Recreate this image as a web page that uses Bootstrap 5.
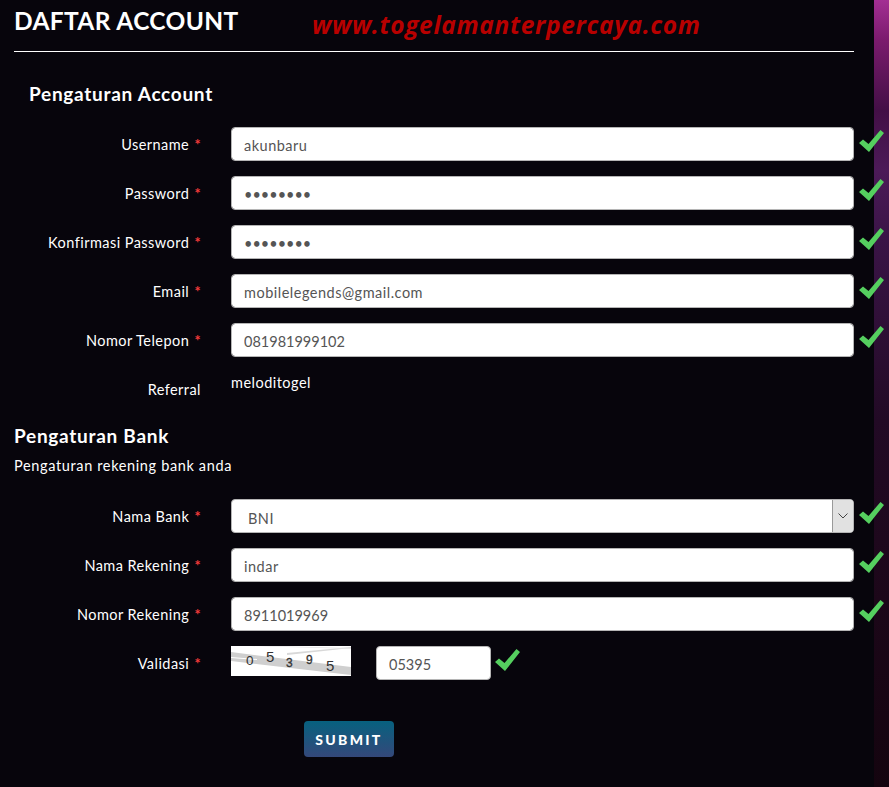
<!DOCTYPE html>
<html lang="id">
<head>
<meta charset="utf-8">
<title>Daftar Account</title>
<link rel="stylesheet" href="https://cdn.jsdelivr.net/npm/bootstrap@5.3.0/dist/css/bootstrap.min.css">
<style>
html,body{height:787px;overflow:hidden}
body{background:#07050c;color:#fff;font-family:"Lato","Noto Sans",sans-serif;font-size:14.5px;letter-spacing:.45px}
.shell{height:787px}
.panel{width:874px;flex:none;padding:0 20px 0 14px;background:#07050c}
.strip{flex:1;background:linear-gradient(180deg,#a32f93 0,#7b1b6d 40px,#430f46 110px,#4c1a58 170px,#3a1446 240px,#220a25 420px,#1c0719 600px,#14040f 787px)}
.headbar{height:52px;border-bottom:1px solid #fff}
.pagetitle{font-size:24.5px;font-weight:700;line-height:41px;margin:0;width:298px;flex:none;letter-spacing:.35px}
.siteurl{font-family:"Open Sans",sans-serif;font-weight:700;font-style:italic;font-size:24.5px;color:#b80000;line-height:49px;letter-spacing:.65px}
.secthead{font-size:19px;font-weight:700;margin:0;line-height:24px;letter-spacing:.72px}
.secthead.first{padding:30px 0 0 15px;margin-bottom:21px}
.frow{display:flex;align-items:flex-start;height:34px;margin-bottom:15px}
.flabel{width:187px;flex:none;text-align:right;line-height:36px;margin:0;white-space:nowrap}
.req{color:#f43a3a;margin-left:1px;font-weight:700}
.field{margin-left:30px;width:623px;flex:none}
.field .form-control,.field .form-select,.capfield{height:34px;border:1px solid #b5b5b5;border-radius:4px;padding:2px 12px 0;color:#555;font-size:14.5px;letter-spacing:.5px;box-shadow:none;background-color:#fff}
.field .plainspaced,.capfield{letter-spacing:0}
.selwrap{position:relative}
.field .form-select{padding-left:16px;padding-top:6px;background-image:none}
.selarrow{position:absolute;right:1px;top:1px;bottom:1px;width:21px;background:#e1e1e1;border-left:1px solid #999;border-radius:0 3px 3px 0;display:flex;align-items:center;justify-content:center}
.okmark{width:26px;height:24px;margin:2px 0 0 4px;flex:none;position:relative;z-index:2}
.reftext{margin-left:30px;line-height:22px;letter-spacing:.48px}
.refrow{height:34px;margin-bottom:18px}
.bankhead{line-height:24px;margin-bottom:7px}
.banksub{line-height:21px;margin-bottom:23px;letter-spacing:.64px}
.capimg{margin-left:30px;display:block;flex:none}
.capfield{width:115px;margin-left:25px;flex:none}
.capok{margin-top:2px;margin-left:3px}
.subwrap{padding-left:290px;margin-top:41px}
.sendbtn{width:90px;height:36px;padding:0;border:0;border-radius:4px;color:#fff;font-weight:900;font-size:14px;letter-spacing:2.3px;background:linear-gradient(180deg,#07617f,#34487a)}
</style>
</head>
<body>
<svg width="0" height="0" class="position-absolute"><defs><symbol id="tick" viewBox="0 0 26 24"><path d="M1 14 5 10.500 10.500 15 22.500 1 26 4 11 23Z" fill="#55cf5f"/></symbol></defs></svg>
<div class="shell d-flex">
<main class="panel">
  <div class="headbar d-flex align-items-start">
    <h1 class="pagetitle">DAFTAR ACCOUNT</h1>
    <div class="siteurl">www.togelamanterpercaya.com</div>
  </div>
  <form>
    <h2 class="secthead first">Pengaturan Account</h2>
    <div class="frow"><label class="flabel">Username <span class="req">*</span></label><div class="field"><input class="form-control" value="akunbaru"></div><svg class="okmark"><use href="#tick"/></svg></div>
    <div class="frow"><label class="flabel">Password <span class="req">*</span></label><div class="field"><input class="form-control plainspaced" type="password" value="12345678"></div><svg class="okmark"><use href="#tick"/></svg></div>
    <div class="frow"><label class="flabel">Konfirmasi Password <span class="req">*</span></label><div class="field"><input class="form-control plainspaced" type="password" value="12345678"></div><svg class="okmark"><use href="#tick"/></svg></div>
    <div class="frow"><label class="flabel">Email <span class="req">*</span></label><div class="field"><input class="form-control" value="mobilelegends@gmail.com"></div><svg class="okmark"><use href="#tick"/></svg></div>
    <div class="frow"><label class="flabel">Nomor Telepon <span class="req">*</span></label><div class="field"><input class="form-control plainspaced" value="081981999102"></div><svg class="okmark"><use href="#tick"/></svg></div>
    <div class="frow refrow"><label class="flabel">Referral</label><div class="reftext">meloditogel</div></div>
    <h2 class="secthead bankhead">Pengaturan Bank</h2>
    <p class="banksub">Pengaturan rekening bank anda</p>
    <div class="frow"><label class="flabel">Nama Bank <span class="req">*</span></label><div class="field selwrap"><select class="form-select"><option>BNI</option></select><span class="selarrow"><svg width="10" height="6" viewBox="0 0 10 6"><path d="M.5.5 5 5 9.500.5" fill="none" stroke="#444"/></svg></span></div><svg class="okmark"><use href="#tick"/></svg></div>
    <div class="frow"><label class="flabel">Nama Rekening <span class="req">*</span></label><div class="field"><input class="form-control" value="indar"></div><svg class="okmark"><use href="#tick"/></svg></div>
    <div class="frow"><label class="flabel">Nomor Rekening <span class="req">*</span></label><div class="field"><input class="form-control plainspaced" value="8911019969"></div><svg class="okmark"><use href="#tick"/></svg></div>
    <div class="frow"><label class="flabel">Validasi <span class="req">*</span></label>
      <svg class="capimg" width="120" height="30" viewBox="0 0 120 30">
        <rect width="120" height="30" fill="#fff"/>
        <path d="M0 6 120 21V29L0 15Z" fill="#cfcfcf"/><path d="M0 11 26 13V14L0 12Z" fill="#fff"/><path d="M56 9 120 2V1L56 7Z" fill="#d8d8d8"/><path d="M20 0 120 3V2L40 0Z" fill="#e4e4e4"/>
        <g font-family="Liberation Sans,sans-serif" fill="#333"><text x="15" y="19" font-size="13.500" font-weight="400">0</text><text x="35" y="16" font-size="15">5</text><text x="55" y="21" font-size="12" stroke="#333" stroke-width=".3">3</text><text x="75" y="18" font-size="12" stroke="#333" stroke-width=".3">9</text><text x="95" y="25" font-size="15">5</text></g>
      </svg>
      <input class="capfield" value="05395"><svg class="okmark capok"><use href="#tick"/></svg></div>
    <div class="subwrap"><button type="button" class="btn sendbtn">SUBMIT</button></div>
  </form>
</main>
<div class="strip"></div>
</div>
<script src="https://cdn.jsdelivr.net/npm/bootstrap@5.3.0/dist/js/bootstrap.bundle.min.js"></script>
</body>
</html>
